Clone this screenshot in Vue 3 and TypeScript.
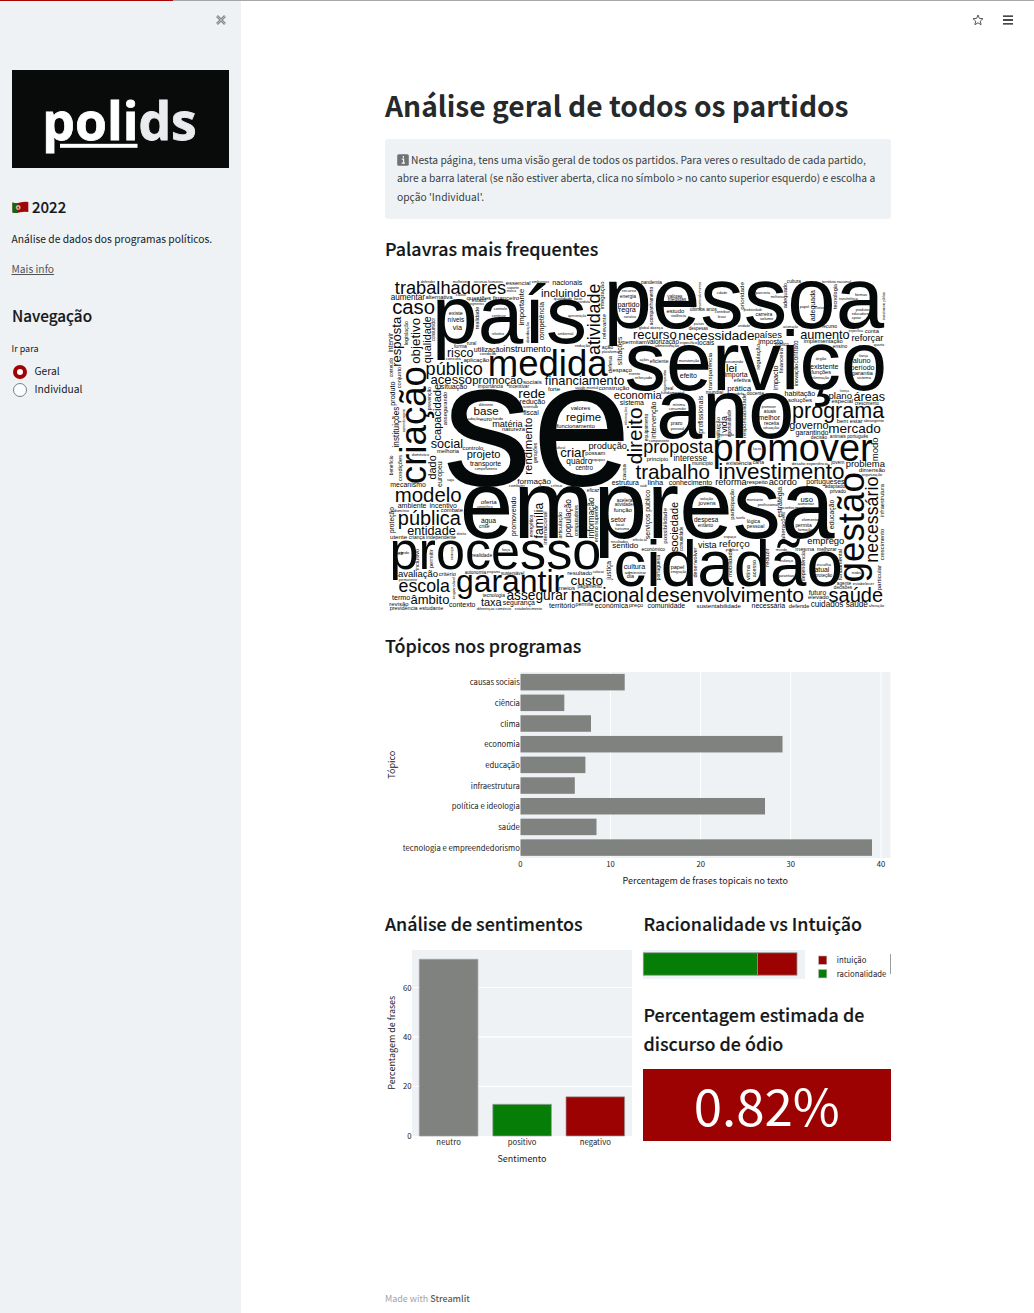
<script setup lang="ts">
type Word = [text: string, start: number, end: number, baseline: number]

interface Placed {
  text: string
  size: number
  transform: string
}

// Horizontal words: ink left, ink right, baseline y
const across: Word[] = [
  ['se', 446, 625, 485.3], ['empresa', 463.5, 835, 538.3], ['pessoa', 608.8, 884.5, 328.3],
  ['serviço', 626.2, 884, 389.6], ['ano', 659.5, 791.5, 438.3], ['país', 437, 584.5, 343.4],
  ['processo', 392.7, 599.5, 568.9], ['cidadão', 616.2, 840.5, 585.8], ['promover', 714.7, 872.2, 460.5],
  ['medida', 490, 607.8, 375.5], ['garantir', 457.3, 563.8, 591.7], ['investimento', 719.7, 843.8, 479.3],
  ['trabalhadores', 395, 505.8, 293.7], ['aumentar', 391, 425, 300.3], ['alternativa', 425.7, 452.7, 299.3],
  ['questões financeiro', 466.7, 519, 299.5], ['essencial', 506, 530.3, 285], ['caso', 393, 434.3, 314],
  ['risco', 447.7, 473, 357], ['utilização', 474.3, 503.3, 351.7], ['instrumento', 503.9, 550.7, 351.5],
  ['aplicação', 463.7, 489, 362.3], ['público', 426.7, 482.3, 374.5], ['acesso', 431, 471.7, 383.5],
  ['promoção', 473, 522.3, 383.5], ['sociais', 523, 541.7, 384.3], ['situação', 441, 467, 388.5],
  ['rede', 519, 545, 397.5], ['redução', 520, 545, 404], ['fiscal', 523.2, 538.3, 414.8],
  ['base', 474.3, 498.3, 414.7], ['euro', 480.3, 491.7, 421], ['matéria', 492.7, 522.7, 427],
  ['natureza', 502.3, 525, 431], ['níveis', 448, 464, 321.5], ['via', 452.7, 462, 329.7],
  ['existe', 449, 462.7, 314.7], ['programa', 793.3, 884.3, 418], ['mercado', 829, 880.3, 433.3],
  ['governo', 789.7, 828.3, 429], ['garantindo', 795.7, 828.3, 435], ['bem estar', 837, 862.7, 423.3],
  ['áreas', 854, 884.7, 401], ['plano', 829, 851.7, 399], ['especial', 831.7, 852.7, 403.3],
  ['habitação', 785, 815, 395.7], ['soluções', 788, 812, 402], ['aumento', 800.7, 849.3, 339],
  ['reforçar', 852, 883.3, 340.7], ['conta', 865, 879, 333], ['países', 755, 781.7, 337.7],
  ['imposto', 758.7, 782.7, 343.7], ['implementação', 804, 842.7, 343.3], ['recurso', 633.7, 676.3, 338.7],
  ['necessidade', 679, 754, 340], ['permitam', 622.7, 646.5, 343.7], ['valorização', 646.9, 678.7, 343.7],
  ['partido', 618, 639.3, 307.3], ['regra', 619.3, 636, 312.3], ['energia', 620, 636, 298.3],
  ['estudo', 666.7, 684, 313.3], ['valores', 667.3, 682.3, 297.7], ['últimos anos', 690, 716.7, 311],
  ['nacionais', 552.7, 582.3, 285.3], ['incluindo', 541.7, 585.7, 296.7], ['economia', 614.3, 661.7, 399.3],
  ['sistema', 620, 644, 404.8], ['financiamento', 545, 624, 385], ['construção', 599, 629, 390],
  ['espaço', 612.7, 631.7, 371.7], ['efeito', 680, 696.7, 377.7], ['eficiente', 650, 668.3, 363.3],
  ['regime', 566.7, 600.7, 421], ['valores', 570.7, 590, 410.3], ['funcionamento', 556.7, 594.7, 427.5],
  ['pandemia', 641.3, 662, 283.5], ['prazo', 671, 682.3, 425], ['lei', 726.7, 736.3, 371.7],
  ['importa', 725, 747.7, 376.8], ['efetiva', 734, 750.7, 381.9], ['prática', 727.7, 751.3, 390.7],
  ['existente', 810.3, 838.3, 368.7], ['funções', 811.3, 831, 373.5], ['aluno', 853, 870.3, 363],
  ['período', 851, 874.3, 370], ['garantia', 851.7, 873, 374.9], ['carreira', 755.7, 772.3, 315.7],
  ['volume', 760, 773.3, 319.7], ['melhor', 758.7, 780, 420.3], ['receita', 764.3, 779, 425],
  ['social', 431, 462.3, 448], ['melhoria', 437.3, 459, 452.9], ['controlo', 462.7, 483, 449.5],
  ['projeto', 467.3, 500, 458.3], ['transporte', 470, 501, 465.7], ['formação', 517.3, 550.7, 483.8],
  ['mecanismo', 390.7, 425.7, 487.3], ['modelo', 396, 461, 502.3], ['ambiente', 398, 426.3, 508],
  ['incentivo', 430, 456.7, 508], ['combate', 441, 462.7, 511.9], ['pública', 399, 461, 524.7],
  ['entidade', 407.7, 455.3, 535.3], ['utente', 390.3, 407, 538.8], ['criança independente', 409, 456, 538.8],
  ['oferta', 481, 496.7, 503.7], ['água', 481.3, 496, 522.7], ['crise', 479.3, 489.3, 527.7],
  ['avaliação', 398.3, 437.7, 576.7], ['critério', 439, 455.7, 576], ['escola', 399.3, 450, 592.3],
  ['termo', 392, 410, 599.5], ['âmbito', 411, 449, 604.3], ['revisão', 389.7, 408.3, 606],
  ['contexto', 449.3, 475.3, 606.5], ['taxa', 481, 501.7, 605.7], ['segurança', 503, 535, 604.7],
  ['assegurar', 507, 567.3, 600], ['tecnologia', 482.7, 505, 596.7], ['criar', 560.7, 585.7, 456.7],
  ['possam', 585.7, 605, 455], ['quadro', 566.7, 592, 464.3], ['centro', 575.7, 592.7, 470],
  ['produção', 589, 626.7, 449.3], ['proposta', 644.3, 713.3, 453], ['princípio', 647, 668, 460.7],
  ['interesse', 674, 706.7, 461], ['trabalho', 635.7, 709.3, 479.3], ['município', 692.3, 712.7, 465.3],
  ['estrutura', 612, 639, 485], ['linha', 648, 663.3, 485], ['conhecimento', 669, 712, 485],
  ['reforma', 715.7, 746.7, 485.3], ['respeito', 747, 767.7, 484], ['acordo', 769, 796.7, 485.3],
  ['portugueses', 806.7, 844.3, 484], ['existência', 726.3, 751.7, 464.8], ['problema', 846.3, 885, 467],
  ['dimensão', 859, 885, 472], ['função', 613.7, 631.7, 512], ['setor', 611, 626, 521.5],
  ['sentido', 612.3, 638, 548.3], ['económico', 641.7, 665, 551], ['cultura', 624, 645.3, 569.3],
  ['custo', 571, 602.7, 584.6], ['resultado', 567.7, 592, 574.5], ['meios', 559, 575, 589.5],
  ['pagamento', 577.7, 601.7, 588.3], ['nacional', 571.7, 642.7, 602], ['desenvolvimento', 646.7, 803.3, 602.3],
  ['território', 549, 575, 607.5], ['permite', 575.9, 593.3, 605.8], ['económica', 595, 628.3, 607.5],
  ['preço', 629.3, 643, 606.7], ['comunidade', 647.7, 685, 607.9], ['sustentabilidade', 696.7, 740.7, 607.9],
  ['necessária', 752, 785.3, 607.9], ['defende', 789, 809.3, 607.7], ['cuidados saúde', 811, 867.7, 607.4],
  ['saúde', 829, 882.3, 601.7], ['futuro', 808.7, 826, 595], ['elevado', 808.3, 828.7, 599.3],
  ['emprego', 807.7, 844, 544.3], ['mesma', 795.7, 814.3, 550.5], ['melhorar', 817.3, 836.7, 550.5],
  ['reforço', 719.7, 749.3, 547], ['vista', 698, 716.7, 548.3], ['uso', 801, 812.7, 502.3],
  ['permita', 795.7, 811.7, 527.3], ['lógica', 747, 760, 523.3], ['atual', 814.7, 829, 571.7],
  ['despesa', 694.3, 718.3, 521.7], ['jovens', 698.3, 715.7, 505], ['entanto', 698, 713, 527],
  // Least frequent words
  ['defender', 421, 435, 282.6], ['mulheres', 453, 468, 282.6], ['recursos humanos', 474, 503, 282.6],
  ['embargos', 532, 549, 282.6], ['cultura', 787, 801, 283], ['território nacional', 822, 851, 283],
  ['suporte', 507, 519, 288.5], ['marca', 507, 516, 292], ['classe', 456, 466, 296],
  ['estado', 472, 486, 301.5], ['segmentos', 469, 484, 305], ['controlo', 494, 507, 310],
  ['continuar', 492, 506, 317], ['relatório', 492, 504, 334.5], ['rural', 467, 476, 345],
  ['forma', 454, 467, 347.5], ['condição', 480, 496, 355], ['consulta', 446, 461, 360],
  ['importância', 478, 503, 388], ['incentivar', 509, 529, 388], ['sustentado', 523, 538, 407.8],
  ['diferente', 479, 493, 406], ['adoção', 468, 480, 420], ['fundo', 492.5, 503, 420],
  ['forte', 548, 560, 391], ['saúde mental', 575, 598, 389], ['qualidade', 554, 572, 299.5],
  ['facto', 574, 582, 299.5], ['conduta', 578, 590, 303], ['apresentação', 568, 586, 317],
  ['ambiental', 558, 573, 335], ['redução', 575, 590, 346.5], ['ação', 602, 613, 349],
  ['plataforma', 602, 619, 353], ['recurso', 622, 636, 292], ['narrativa', 624, 636, 317.5],
  ['medidas', 668, 686, 300.5], ['violência', 671, 686, 316.5], ['global doença', 639, 663, 329],
  ['países', 694, 704, 325], ['despesas', 689, 708, 329.5], ['administração', 655, 679, 347],
  ['específico', 680, 697, 343.5], ['locais', 698, 714, 345], ['ações', 640, 649, 361],
  ['manutenção', 679, 699, 361.5], ['evento', 629, 640, 375], ['reforçado', 635, 652, 379],
  ['real', 666, 673, 390], ['fundamental', 661, 684, 394], ['mundial', 706, 723, 394],
  ['mínima', 673, 685, 406], ['consumidor', 669, 686, 410], ['pessoal', 671, 684, 430],
  ['importação', 718, 734, 436], ['componente', 649, 669, 442], ['cidade', 717, 727, 294],
  ['contribuir', 715, 730, 313], ['levar', 718, 726, 318], ['parceria', 756, 770, 294],
  ['melhorias', 771, 784, 298], ['produtividade', 744, 762, 311], ['papel', 800, 809, 308],
  ['custos', 815, 824, 309], ['formas', 855, 867, 296], ['transferência', 839, 858, 300],
  ['produtos', 856, 870, 311], ['educadores', 852, 870, 315], ['apoiar', 852, 861, 319],
  ['unidade', 738, 750, 327], ['automação', 783, 798, 327.5], ['recurso', 822, 837, 328],
  ['específica', 849, 863, 332], ['público', 775, 789, 346], ['ensino', 833, 847, 348],
  ['quanto', 874, 884, 346], ['órgão', 816, 826, 360], ['eliminação', 812, 829, 379],
  ['fiança', 859, 868, 357], ['sistema', 857, 871, 378.5], ['assumindo', 725, 743, 363],
  ['modelo', 731, 744, 395], ['docente', 747, 764, 395], ['promover', 762, 776, 408],
  ['atuais', 764, 776, 413], ['situação', 763, 779, 428.5], ['animais português', 830, 868, 438],
  ['decisão', 811, 827, 438.5], ['abrangente', 864, 884, 421.5], ['licença', 840, 849, 391.5],
  ['crescimento', 855, 879, 405], ['saga', 447, 454, 481], ['doméstico', 412, 429, 456],
  ['comportamento', 475, 497, 470], ['combater', 509, 525, 487], ['domínio', 394, 409, 511.5],
  ['competência', 477, 493, 507.5], ['direito', 457, 466, 535], ['realidade', 472, 492, 557],
  ['força', 502, 510, 551], ['autonomia', 465, 486, 574], ['sustentável', 501, 524, 575],
  ['programa', 487, 500, 573], ['permanente', 399, 417, 580.5], ['previdência estudante', 390, 443, 609.5],
  ['diferenças comércio', 477, 511, 609.5], ['estabelecimento', 515, 542, 609.5],
  ['vez', 394, 403, 555], ['rápido', 399, 409, 554], ['eficaz', 587, 599, 492],
  ['cultural', 555, 565, 449], ['equipas', 592, 605, 461], ['crítico', 551, 562, 487],
  ['acelerar', 617, 634, 502], ['atividades', 615, 635, 505.5], ['local', 616, 624, 526],
  ['turismo', 615, 629, 530], ['eficácia', 633, 647, 541], ['resultados', 611, 628, 543],
  ['administrar', 625, 646, 573.5], ['dia', 627, 634, 577.5], ['colocar', 593, 604, 573],
  ['papel', 671, 684, 568.5], ['emigração', 671, 686, 573], ['solução', 700, 713, 500],
  ['saúde', 640, 647, 487], ['desafio experiência', 792, 828, 465],
  ['jovem', 831, 844, 464], ['carta', 753, 764, 464], ['lucro', 753, 761, 450],
  ['montante', 747, 763, 501], ['profissional', 758, 778, 506], ['reconhecimento', 780, 806, 508.5],
  ['aumentar', 798, 814, 505], ['elemento', 802, 818, 521], ['pessoal', 747, 764, 528],
  ['formação', 798, 812, 530.5], ['adaptado', 825, 845, 488], ['privado', 830, 846, 493],
  ['organização', 862, 882, 475.5], ['tarefa', 736, 745, 519], ['espaço', 724, 736, 538],
  ['mundo', 776, 787, 551], ['esforço', 780, 793, 562], ['garantias', 778, 794, 577],
  ['escolha', 817, 831, 566], ['proteção', 815, 832, 577], ['agente', 837, 851, 585],
  ['decisões', 834, 852, 589], ['estabelecer', 853, 874, 584.5], ['alteração', 869, 884, 607],
  ['modos', 852, 861, 574], ['público', 726, 738, 551],
]

// Words rotated to read upwards: ink bottom, ink top, baseline x
const upward: Word[] = [
  ['criação', 482.7, 367.3, 425.5], ['gestão', 581, 473.3, 864], ['resposta', 366, 316.7, 401.3],
  ['objetivo', 363.3, 318.3, 420.3], ['qualidade', 362.7, 316.7, 431], ['capacidade', 440, 384.3, 440.5],
  ['importante', 325, 289, 524], ['competência', 340, 302, 543.5], ['produto', 405.3, 381.7, 394.7],
  ['instituições', 447, 406.7, 398.5], ['integração', 309, 281.7, 604.3], ['atividade', 354.3, 284.3, 600],
  ['relevante', 339, 314.3, 606], ['situações', 365, 336.7, 622.3], ['defesa', 373, 356, 612],
  ['rendimento', 474, 418, 532], ['direito', 463.3, 408.3, 642.3], ['intervenção', 438.3, 401.7, 655.7],
  ['profissionais', 433.3, 395.7, 702.7], ['transparência', 390, 352.7, 712.3], ['prioridade', 309.3, 282.3, 744.3],
  ['adequado', 308, 283, 786.7], ['adequada', 321, 290, 814.7], ['tecnologia', 309, 284, 836.7],
  ['regulação', 369.3, 344, 760], ['impacto', 390, 365.7, 778.3], ['financeira', 373.3, 348, 782.7],
  ['contrato', 363.3, 340.7, 798.3], ['inovação', 386, 364, 798], ['vida', 432.7, 416, 727],
  ['responsabilidade', 437.7, 394, 746], ['oportunidade', 437, 410, 731], ['dado', 479, 455.7, 436],
  ['europeu', 486.7, 461.7, 442.3], ['condições', 480.7, 455, 401.7], ['benefício', 475, 455.7, 393],
  ['proteção', 532.7, 507.3, 394.3], ['permitir', 567.7, 549.3, 433], ['promovendo', 535.7, 496.7, 516],
  ['família', 538.3, 502.7, 542.7], ['internacional', 544.3, 511.7, 547], ['população', 536.7, 499.3, 571.3],
  ['articulação', 538.3, 511.7, 562.3], ['informação', 537.7, 497.7, 594], ['serviços público', 539, 490, 650],
  ['possibilidade', 543.3, 508.3, 666.7], ['sociedade', 551.7, 502.3, 678.3], ['justiça', 580, 561, 610.7],
  ['desenvolver', 577.3, 547.3, 696.7], ['necessário', 561.7, 477.3, 878.3], ['modo', 460.7, 437.7, 878.3],
  ['crescimento', 560, 529, 884], ['infraestrutura', 516.7, 484, 884], ['educação', 529, 500, 834],
  ['estratégia', 517.3, 486.7, 781.7], ['participação', 519.3, 489, 734], ['reduzir', 566.7, 548.3, 769],
  ['mobilidade', 576.7, 549.3, 732], ['fundamental', 580, 549.3, 842.3], ['particular', 590, 565, 881],
  ['legislação', 345, 321, 407.5], ['consumidor', 341, 318, 435], ['realidade', 329, 307, 478.5],
  ['conjunto', 388, 367, 401], ['conteúdo', 377, 358, 392.5], ['prevenção', 410, 387, 430.5],
  ['assegurando', 425, 392, 446.5], ['aprendizagem', 432, 409, 405], ['intervir', 352, 333, 392.5],
  ['distribuição', 343, 322, 528.5], ['acompanhamento', 325, 287, 653],
  ['desenvolvimento', 310, 282, 701], ['equipamento', 441, 414, 648], ['informações', 425, 407, 626.5],
  ['desempenho', 392, 370, 665.5], ['causa', 480, 464, 625.5], ['ensino superior', 542, 505, 598],
  ['investimento público', 320, 292, 884.5], ['instituição', 443, 417, 720], ['gerações', 463, 443, 537],
  ['responsável', 599, 577, 454.5], ['inclusivo', 570, 549, 419],
  ['energético', 537, 515, 533], ['computadores', 536, 505, 578],
  ['portuguesa', 580, 555, 660], ['comunidade', 551, 527, 683], ['vítima', 580, 565, 750],
  ['acesso', 577, 560, 756], ['dependência', 581, 551, 804.5],
  ['alterações', 540, 512, 784.5], ['criança', 560, 547, 453],
]

const inkContext = document.createElement('canvas').getContext('2d')!
inkContext.font = '100px "Liberation Sans", Arial, sans-serif'

function place([text, start, end, baseline]: Word, vertical: boolean): Placed {
  const m = inkContext.measureText(text)
  const ratio = Math.abs(end - start) / (m.actualBoundingBoxLeft + m.actualBoundingBoxRight)
  const shift = m.actualBoundingBoxLeft * ratio
  return {
    text,
    size: ratio * 100,
    transform: vertical
      ? `translate(${baseline} ${start - shift}) rotate(-90)`
      : `translate(${start + shift} ${baseline})`,
  }
}

const words: Placed[] = [
  ...across.map((w) => place(w, false)),
  ...upward.map((w) => place(w, true)),
]

const topics = [
  { name: 'causas sociais', end: 624.7, label: 50 },
  { name: 'ciência', end: 564.3, label: 25 },
  { name: 'clima', end: 591, label: 19.5 },
  { name: 'economia', end: 782.5, label: 35.5 },
  { name: 'educação', end: 585.4, label: 34.5 },
  { name: 'infraestrutura', end: 574.8, label: 49 },
  { name: 'política e ideologia', end: 765, label: 68 },
  { name: 'saúde', end: 596.5, label: 21.5 },
  { name: 'tecnologia e empreendedorismo', end: 872, label: 117 },
]
const topicTicks = [0, 10, 20, 30, 40]

const feelings = [
  { name: 'neutro', x: 419.3, top: 959.3, color: '#808280', label: 24.5 },
  { name: 'positivo', x: 492.8, top: 1104.3, color: '#067d06', label: 28.5 },
  { name: 'negativo', x: 566, top: 1096.8, color: '#9c0202', label: 31 },
]
const feelingTicks = [
  { value: 0, y: 1135.7 },
  { value: 20, y: 1086.4 },
  { value: 40, y: 1036.8 },
  { value: 60, y: 987.5 },
]
</script>

<template>
  <div class="page">
    <div class="stripe"><i></i></div>
    <aside class="sidebar">
      <div class="close">
        <svg width="10" height="10" viewBox="0 0 10 10"><path d="M1 1 9 9M9 1 1 9" stroke="#858889" stroke-width="2.6" /><path d="M1 1 9 9M9 1 1 9" stroke="#d9dcdd" stroke-width=".6" /></svg>
      </div>
      <svg class="logo" width="217" height="98" viewBox="12 70 217 98">
        <rect x="12" y="70" width="217" height="98" fill="#080b0a" />
        <text x="42.3" y="139.5" textLength="154.5" lengthAdjust="spacingAndGlyphs" class="brand">poli<tspan fill="#e9ebee" stroke="#e9ebee">ds</tspan></text>
        <rect x="60" y="143.8" width="77.5" height="4" fill="#fff" />
      </svg>
      <h2 class="year">
        <svg width="17" height="13" viewBox="0 0 17 13">
          <path d="M.5 1.5Q4 2.7 8 1.6T16.3 1V11Q12 10.2 8 11.3T.5 11.6Z" fill="#a00508" />
          <path d="M.5 1.5Q3 2.4 6 2.1V11.8Q3 12.2 .5 11.6Z" fill="#0a6a12" />
          <circle cx="6.2" cy="6.6" r="2.5" fill="#a8996f" /><path d="M5 5.2h2.4v2q-1.2 2-2.4 0Z" fill="#a00508" stroke="#fff" stroke-width=".6" />
        </svg>
        <span>2022</span>
      </h2>
      <p class="about">Análise de dados dos programas políticos.</p>
      <a class="more">Mais info</a>
      <h2 class="nav-title">Navegação</h2>
      <div class="nav-label">Ir para</div>
      <label class="option"><span class="radio on"></span><span>Geral</span></label>
      <label class="option"><span class="radio"></span><span>Individual</span></label>
    </aside>

    <main class="main">
      <div class="toolbar">
        <svg width="12" height="12" viewBox="0 0 12 12"><path d="M6 1 7.4 4.4 11 4.7 8.3 7.1 9.1 10.7 6 8.8 2.9 10.7 3.7 7.1 1 4.7 4.6 4.4Z" fill="none" stroke="#55585a" stroke-width="1" /></svg>
        <svg width="10" height="10" viewBox="0 0 10 10"><path d="M0 1.2H10M0 5H10M0 8.8H10" stroke="#0c0f10" stroke-width="1.3" /></svg>
      </div>

      <div class="content">
        <h1>Análise geral de todos os partidos</h1>
        <div class="info">
          <svg class="info-icon" width="12" height="12" viewBox="0 0 12 12">
            <rect x=".2" y=".2" width="11.6" height="11.6" rx="1.6" fill="#707374" />
            <path d="M6.4 2v1.8M4.8 5.2H6.6V9M4.6 9.2H8" stroke="#f4f6f7" stroke-width="1.2" fill="none" />
          </svg>
          <span>Nesta página, tens uma visão geral de todos os partidos. Para veres o resultado de cada partido,</span><br />
          <span>abre a barra lateral (se não estiver aberta, clica no símbolo &gt; no canto superior esquerdo) e escolha a</span><br />
          <span>opção 'Individual'.</span>
        </div>

        <h3>Palavras mais frequentes</h3>
        <svg class="cloud" width="506" height="340" viewBox="385 275 506 340">
          <text v-for="(w, i) in words" :key="i" :transform="w.transform" :font-size="w.size">{{ w.text }}</text>
        </svg>

        <h3 class="topics-title">Tópicos nos programas</h3>
        <svg class="chart" width="506" height="230" viewBox="385 665 506 230">
          <rect x="520.5" y="672" width="370" height="186" fill="#eef2f5" />
          <path d="M610.5 672V858M700.5 672V858M790.7 672V858M881 672V858" stroke="#fff" stroke-width="1" />
          <g v-for="(t, i) in topics" :key="t.name">
            <rect x="520.5" :y="673.9 + i * 20.68" :width="t.end - 520.5" height="16.5" fill="#808280" />
            <text x="519.8" :y="685.4 + i * 20.68" text-anchor="end" :textLength="t.label">{{ t.name }}</text>
          </g>
          <text v-for="n in topicTicks" :key="n" :x="520.5 + n * 9.01" y="867.4" text-anchor="middle">{{ n }}</text>
          <text class="axis" x="705.3" y="884.3" text-anchor="middle" textLength="165.5">Percentagem de frases topicais no texto</text>
          <text class="axis" transform="translate(395 764.7) rotate(-90)" text-anchor="middle" textLength="28">Tópico</text>
        </svg>

        <div class="columns">
          <section class="left">
            <h3>Análise de sentimentos</h3>
            <svg class="chart" width="248" height="225" viewBox="385 945 248 225">
              <rect x="412" y="950" width="220" height="186" fill="#eef2f5" />
              <path d="M412 987.5H632M412 1036.8H632M412 1086.4H632" stroke="#fff" stroke-width="1.2" />
              <g v-for="f in feelings" :key="f.name">
                <rect :x="f.x" :y="f.top" width="58.6" :height="1136 - f.top" :fill="f.color" />
                <path :d="`M${f.x} 1136V${f.top}H${f.x + 58.6}V1136Z`" fill="none" stroke="#9a9d9c" stroke-width=".7" />
                <text :x="f.x + 29.3" y="1145.2" text-anchor="middle" :textLength="f.label">{{ f.name }}</text>
              </g>
              <text v-for="t in feelingTicks" :key="t.value" x="411.5" :y="t.y + 3" text-anchor="end">{{ t.value }}</text>
              <text class="axis" x="522" y="1162.3" text-anchor="middle" textLength="49">Sentimento</text>
              <text class="axis" transform="translate(395 1042.7) rotate(-90)" text-anchor="middle" textLength="94">Percentagem de frases</text>
            </svg>
          </section>
          <section class="right">
            <h3>Racionalidade vs Intuição</h3>
            <svg class="chart" width="248" height="40" viewBox="643 945 248 40">
              <rect x="643" y="950" width="162" height="29" fill="#eef2f5" />
              <rect x="643.3" y="952.8" width="114.2" height="22.4" fill="#067d06" stroke="#8f9391" stroke-width=".8" />
              <rect x="757.5" y="952.8" width="39.5" height="22.4" fill="#9c0202" stroke="#8f9391" stroke-width=".8" />
              <rect x="818.6" y="956" width="8.2" height="8.3" fill="#9c0202" stroke="#b0b2b2" stroke-width=".6" />
              <rect x="818.6" y="969.6" width="8.2" height="8.3" fill="#067d06" stroke="#b0b2b2" stroke-width=".6" />
              <text x="836.8" y="963.4" textLength="29.5">intuição</text>
              <text x="836.8" y="977.1" textLength="49.5">racionalidade</text>
              <path d="M890.5 954V974" stroke="#9a9d9e" />
            </svg>
            <h3 class="hate-title">Percentagem estimada de discurso de ódio</h3>
            <div class="hate"><span>0.82%</span></div>
          </section>
        </div>
        <footer>Made with <b>Streamlit</b></footer>
      </div>
    </main>
  </div>
</template>

<style>
body { background: #fff; }
</style>

<style scoped>
.page {
  position: relative;
  display: flex;
  width: 1034px;
  height: 1313px;
  overflow: hidden;
  font-family: "Noto Sans CJK JP", "Noto Sans", sans-serif;
  font-size: 10.28px;
  color: #14181a;
}
.page * { box-sizing: border-box; }
h1, h2, h3, p { margin: 0; white-space: nowrap; }
svg { display: block; }

.stripe { position: absolute; top: 0; left: 0; width: 100%; height: 1px; background: #a5a7a9; }
.stripe i { display: block; width: 173px; height: 1px; background: #a80509; }

.sidebar { width: 241px; flex: none; padding: 15px 12px 0; background: #eef2f5; }
.close { display: flex; justify-content: flex-end; padding-right: 3px; height: 55px; }
.logo { margin-bottom: 27px; }
.brand { font: 700 52px "Open Sans", "Noto Sans", sans-serif; fill: #fff; stroke: #fff; stroke-width: .8px; }
.year, .nav-title { -webkit-text-stroke: .15px currentColor; font-weight: 500; line-height: 24px; }
.year { display: flex; align-items: center; gap: 3px; height: 24px; font-size: 15px; }
.about { margin-top: 11px; margin-left: -.5px; line-height: 18px; }
.more { display: block; margin-top: 12px; margin-left: -.5px; line-height: 18px; color: #505456; text-decoration: underline; }
.nav-title { margin-top: 26px; height: 24px; line-height: 23px; font-size: 15.3px; }
.nav-label { margin-top: 12px; margin-left: -.5px; margin-bottom: 6px; height: 17px; font-size: 9px; line-height: 17px; }
.option { display: flex; align-items: center; gap: 7.5px; height: 18px; padding-left: 1px; line-height: 18px; }
.option span:last-child { height: 20px; }
.radio { width: 14px; height: 14px; border-radius: 50%; border: 1px solid #7c8082; background: #fafbfc; }
.radio.on { border: 4.5px solid #a00306; background: #fff; }

.main { flex: 1; }
.toolbar { display: flex; justify-content: flex-end; align-items: center; gap: 19px; height: 40px; padding-right: 21px; }
.content { width: 506px; margin-left: 144px; padding-top: 49px; }
h1 { height: 34px; line-height: 31px; font-size: 28.2px; font-weight: 700; color: #26292c; }
h3 { height: 28px; line-height: 26px; font-size: 17.87px; font-weight: 500; -webkit-text-stroke: .18px currentColor; }
.info { height: 80px; margin: 16px 0; padding: 12px; border-radius: 3px; background: #eef2f5; color: #3a3e41; line-height: 18.4px; white-space: nowrap; }
.info-icon { display: inline-block; vertical-align: -2px; margin-right: 2px; }
.cloud { margin: 12px 0 18px; fill: #060909; font-family: "Liberation Sans", Arial, sans-serif; overflow: visible; }
.chart { font-size: 7.7px; fill: #1c2022; overflow: visible; }
.axis { font-size: 9px; }
.topics-title { line-height: 25px; }
.topics-title + .chart { margin-top: 4px; }
.columns { display: flex; gap: 10px; margin-top: 16px; height: 369px; }
.columns h3 { line-height: 25px; }
.left, .right { width: 248px; flex: none; }
.right h3 { padding-left: .5px; }
.columns .chart { margin-top: 6px; }
.columns .hate-title { height: 58px; margin-top: 15px; line-height: 28.7px; white-space: normal; }
.hate { display: flex; align-items: center; justify-content: center; width: 247.5px; height: 72px; margin-top: 11px; background: #9c0202; color: #fff; font-size: 51px; line-height: 72px; }
.hate span { height: 74px; }
footer { margin-top: 10px; line-height: 18px; font-size: 8.95px; color: #a0a3a5; }
footer b { font-weight: 500; color: #5b5e60; }
</style>
